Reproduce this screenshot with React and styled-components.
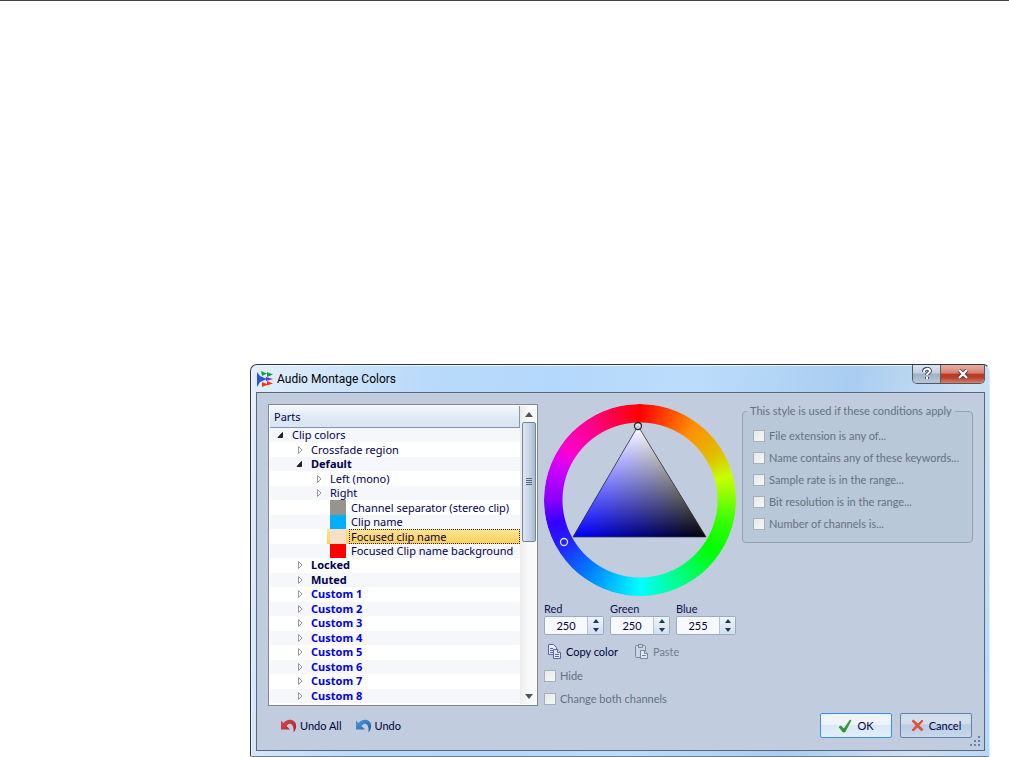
import React, { useState } from "react";
import styled, { createGlobalStyle, css } from "styled-components";

const GlobalStyle = createGlobalStyle`
  * { box-sizing: border-box; }
  body {
    margin: 0;
    background: #fff;
    color: #10104a;
    font-family: Lato, "Open Sans", sans-serif;
    font-size: 11px;
    line-height: 14px;
  }
  button, input {
    font: inherit;
    color: inherit;
  }
`;

const Page = styled.main`
  border-top: 1px solid #444;
  padding: 363px 19px 0 250px;
`;

const Dialog = styled.section`
  border: 1px solid #2b3440;
  border-right-color: #d8ecfa;
  border-bottom-color: #777d85;
  border-radius: 7px 7px 2px 2px;
  padding: 0 4px 5px 5px;
  background: linear-gradient(100deg, #e4effa 0, #b9dafa 22%, #b4d8fb 38%, #bcdcfb 55%, #a9cdf0 75%, #cfe0f2 90%, #b5d9fa 100%);
  box-shadow: inset 1px 1px 0 #eef7ff;
`;

const TitleBar = styled.header`
  display: flex;
  align-items: center;
  height: 27px;
  padding-left: 1px;
`;

const Title = styled.h1`
  margin: 0 auto 0 4px;
  color: #000;
  font: 400 12px/16px Roboto, sans-serif;
`;

const WindowButtons = styled.div`
  display: flex;
  align-self: flex-start;
  border: 1px solid #4e5a6c;
  border-top: 0;
  border-radius: 0 0 5px 5px;
  overflow: hidden;
`;

const WindowButton = styled.button`
  display: grid;
  place-items: center;
  width: ${({ $close }) => ($close ? "44px" : "27px")};
  height: 18px;
  padding: 0;
  border: 0;
  border-left: ${({ $close }) => ($close ? "1px solid #6b5660" : "0")};
  background: ${({ $close }) =>
    $close
      ? "linear-gradient(#e9b0a4 0, #d68272 45%, #bb3a22 50%, #b8402a 70%, #d8806a 100%)"
      : "linear-gradient(#dce5f0 0, #c2cfde 45%, #a0b1c5 50%, #b8c9dc 100%)"};
`;

const Panel = styled.div`
  position: relative;
  border: 1px solid #56677f;
  padding: 11px 11px 12px;
  background: #c1cddf;
`;

const Columns = styled.div`
  display: grid;
  grid-template-columns: 270px 192px 1fr;
  gap: 6px;
  align-items: start;
`;

const TreeBox = styled.div`
  display: grid;
  grid-template-columns: 1fr 16px;
  height: 302px;
  border: 1px solid #7f8794;
  padding: 1px;
  background: #fff;
  font-family: "Noto Sans", "Open Sans", sans-serif;
  color: #00004f;
`;

const TreeMain = styled.div`
  display: flex;
  flex-direction: column;
  min-width: 0;
`;

const TreeHeader = styled.div`
  height: 22px;
  padding: 3px 4px;
  border-right: 1px solid #8296b0;
  border-bottom: 1px solid #8296b0;
  background: linear-gradient(#f4f8fc, #dfe9f5 55%, #d9e5f3);
  line-height: 16px;
`;

const TreeList = styled.ul`
  display: grid;
  grid-template-rows: repeat(19, 1fr);
  height: 275px;
  margin: 0;
  padding: 0;
  list-style: none;
`;

const TreeRow = styled.li`
  display: flex;
  align-items: center;
  min-height: 0;
  padding-left: ${({ $level }) => `${5 + $level * 19}px`};
  background: ${({ $odd }) => ($odd ? "#fff" : "#f6f7fa")};
  font-weight: ${({ $bold }) => ($bold ? 700 : 400)};
  color: ${({ $custom }) => ($custom ? "#0000f0" : "inherit")};
`;

const Arrow = styled.svg`
  flex: none;
  width: 14px;
  height: 10px;
  margin-right: 3px;
`;

const Swatch = styled.span`
  align-self: stretch;
  flex: none;
  width: 16px;
  margin-right: 3px;
  background: ${({ $color }) => $color};
`;

const Leaf = styled.span`
  display: flex;
  align-items: center;
  align-self: stretch;
  flex: 1;
  padding-left: 2px;
  white-space: nowrap;
  ${({ $selected }) =>
    $selected &&
    css`
      outline: 1px dotted #222;
      outline-offset: -1px;
    `}
`;

const LeafRow = styled(TreeRow)`
  padding-left: 60px;
  ${({ $selected }) =>
    $selected &&
    css`
      background: linear-gradient(90deg, #fff 57px, transparent 57px), linear-gradient(#ffe596, #ffcf55);
    `}
`;

const ScrollBar = styled.div`
  display: grid;
  grid-template-rows: 16px 120px 1fr 16px;
  justify-items: center;
  align-items: center;
  padding-left: 1px;
  background: linear-gradient(90deg, #ededed, #fafafa 60%);
`;

const Thumb = styled.div`
  display: grid;
  place-items: center;
  width: 14px;
  height: 120px;
  border: 1px solid #71849e;
  border-radius: 2px;
  background: linear-gradient(90deg, #dfe8f3, #c9d6e6 50%, #a8bace);
`;

const Picker = styled.div`
  display: flex;
  flex-direction: column;
`;

const Wheel = styled.div`
  position: relative;
  width: 192px;
  height: 192px;
`;

const HueRing = styled.div`
  height: 100%;
  border-radius: 50%;
  background: conic-gradient(#f00, #ff8c00 35deg, #e0c000 60deg, #c8ff00 75deg, #3f0 105deg, #0f0 125deg, #00ff60 145deg, #0ff 180deg, #0080ff 215deg, #22f 240deg, #30f 255deg, #80f 270deg, #c0f 290deg, #f0c 305deg, #ff0090 325deg, #f00);
  mask: radial-gradient(circle, transparent 77px, #000 78px);
`;

const Shade = styled.svg`
  position: absolute;
  inset: 0;
  isolation: isolate;

  .light {
    mix-blend-mode: plus-lighter;
  }
`;

const Channels = styled.div`
  display: flex;
  gap: 6px;
  margin-top: 6px;
`;

const Channel = styled.label`
  width: 60px;
`;

const Spin = styled.div`
  display: flex;
  height: 19px;
  border: 1px solid #9dabc0;
  border-radius: 2px;
  background: #f7f9fc;
`;

const SpinInput = styled.input`
  flex: 1;
  min-width: 0;
  padding: 0;
  border: 0;
  background: transparent;
  color: #00003a;
  text-align: center;
`;

const SpinArrows = styled.div`
  display: grid;
  grid-template-rows: 1fr 1fr;
  width: 16px;
  border-left: 1px solid #b3c3d8;
  background: linear-gradient(#eef4fa, #d3dfed);
`;

const SpinButton = styled.button`
  display: grid;
  place-items: center;
  padding: 0;
  border: 0;
  background: transparent;
`;

const Tools = styled.div`
  display: flex;
  align-items: center;
  gap: 12px;
  height: 22px;
  margin: 6px 0 2px;
`;

const ToolButton = styled.button`
  display: flex;
  align-items: center;
  gap: 3px;
  padding: 0 1px 0 3px;
  border: 0;
  background: transparent;
  white-space: nowrap;
  color: #00003a;

  &:disabled {
    color: #717c8c;
  }
`;

const CheckList = styled.div`
  display: grid;
  gap: ${({ $gap }) => $gap || 0};
`;

const CheckRow = styled.label`
  display: flex;
  align-items: center;
  gap: 4px;
  height: 22px;
  white-space: nowrap;
  color: #647080;
`;

const CheckBox = styled.input`
  appearance: none;
  flex: none;
  width: 12px;
  height: 12px;
  margin: 0;
  border: 1px solid #a9adb4;
  background: linear-gradient(135deg, #e6e8ea, #f8f8f8);
`;

const Conditions = styled.fieldset`
  min-width: 0;
  margin: 0;
  padding: 7px 10px;
  border: 1px solid #93a1b3;
  border-radius: 4px;
  background: #b9c8d9;
`;

const Legend = styled.legend`
  margin-left: -6px;
  padding: 0 3px;
  color: #647080;
  white-space: nowrap;
`;

const Footer = styled.footer`
  display: flex;
  align-items: center;
  gap: 9px;
  margin-top: 3px;
  padding: 0 1px 0 9px;
`;

const DialogButtons = styled.div`
  display: flex;
  gap: 8px;
  margin-left: auto;
`;

const PushButton = styled.button`
  display: flex;
  align-items: center;
  justify-content: center;
  gap: 5px;
  width: 72px;
  height: 25px;
  padding: 0;
  border: 1px solid ${({ $primary }) => ($primary ? "#3c8df5" : "#637fa8")};
  border-radius: 2px;
  background: ${({ $primary }) =>
    $primary
      ? "linear-gradient(#edf4fc 45%, #dbe8f7 50%, #e4eefa)"
      : "linear-gradient(#d3deec 42%, #b8cce5 48%, #c9d8ea)"};
  color: #00003a;
`;

const Grip = styled.svg`
  position: absolute;
  right: 3px;
  bottom: 3px;
`;

const tree = [
  { name: "Clip colors", level: 0, open: true },
  { name: "Crossfade region", level: 1 },
  { name: "Default", level: 1, open: true, bold: true },
  { name: "Left (mono)", level: 2 },
  { name: "Right", level: 2 },
  { name: "Channel separator (stereo clip)", color: "#98938c" },
  { name: "Clip name", color: "#00b0ff" },
  { name: "Focused clip name", color: "#fbdfc4", selected: true },
  { name: "Focused Clip name background", color: "#ff0000" },
  { name: "Locked", level: 1, bold: true },
  { name: "Muted", level: 1, bold: true },
  ...[1, 2, 3, 4, 5, 6, 7, 8].map((n) => ({
    name: `Custom ${n}`,
    level: 1,
    bold: true,
    custom: true,
  })),
];

const conditions = [
  "File extension is any of...",
  "Name contains any of these keywords...",
  "Sample rate is in the range...",
  "Bit resolution is in the range...",
  "Number of channels is...",
];

const AppIcon = () => (
  <svg width="16" height="16" viewBox="0 0 16 16">
    <path d="M0 1l3 4 7 3-7 3-3 5z" fill="#2a55e0" />
    <path d="M4 0l6 2.500L5 5zM10 1l6 2.500L10 6z" fill="#18a040" />
    <path d="M9 6l7 2-7 2z" fill="#7a2be0" />
    <path d="M10 10l6 2.500-6 2zM5 11l6 2.500L5 16z" fill="#ee3b14" />
  </svg>
);

const TreeArrow = ({ open }) => (
  <Arrow viewBox="0 0 14 10">
    {open ? (
      <path d="M7.500 2.500v5h-4.500z" fill="#222" stroke="#222" strokeWidth="1" />
    ) : (
      <path d="M4.500 1.500l3.500 3.500-3.500 3.500z" fill="#fff" stroke="#999" />
    )}
  </Arrow>
);

const ScrollArrow = ({ down }) => (
  <svg width="8" height="5" viewBox="0 0 8 5">
    <path d={down ? "M0 0h8L4 5z" : "M4 0l4 5H0z"} fill="#50545a" />
  </svg>
);

const SpinArrow = ({ down }) => (
  <svg width="6" height="4" viewBox="0 0 6 4">
    <path d={down ? "M0 0h6L3 4z" : "M3 0l3 4H0z"} fill="#173a5e" />
  </svg>
);

const CopyIcon = () => (
  <svg width="16" height="16" viewBox="0 0 16 16" fill="#e7ecfa" stroke="#5d62a8">
    <path d="M1.500 .5h5l3 3v7h-8z" />
    <path d="M3 4.500h3M3 6.500h3M3 8.500h3" />
    <path d="M6.500 5.500h4l3 3v6h-7z" />
    <path d="M10.500 5.500v3h3M8 10.500h4M8 12.500h4" />
  </svg>
);

const PasteIcon = () => (
  <svg width="16" height="16" viewBox="0 0 16 16" fill="#cbd5e2" stroke="#7c8796">
    <rect x="1.500" y="1.500" width="10" height="12" rx="1" />
    <path d="M4.500 .5h4v3h-4z" />
    <path d="M6.500 6.500h4l3 3v5h-7z" fill="#e2e8ef" />
    <path d="M10.500 6.500v3h3M8 11.500h4" />
  </svg>
);

const UndoIcon = ({ id, from, to }) => (
  <svg width="17" height="14" viewBox="0 0 17 14">
    <defs>
      <linearGradient id={id} x1="0" x2="1" y2="1">
        <stop offset="0" stopColor={from} />
        <stop offset="1" stopColor={to} />
      </linearGradient>
    </defs>
    <path
      d="M1 1.500l2.500 2.500C6 1 9 .3 12 1c5 1.500 5.500 8 1.500 12.500C14 9 13 5.500 10.500 4.800 8.800 4.300 7.500 5.500 6.500 7L10 10.500H1z"
      fill={`url(#${id})`}
    />
  </svg>
);

const ColorWheel = () => (
  <Wheel>
    <HueRing />
    <Shade width="192" height="192" viewBox="0 0 192 192">
      <defs>
        <linearGradient id="white" gradientUnits="userSpaceOnUse" x1="94" y1="22" x2="94" y2="133">
          <stop offset="0" stopColor="#fff" />
          <stop offset="1" stopColor="#000" />
        </linearGradient>
        <linearGradient id="blue" gradientUnits="userSpaceOnUse" x1="29" y1="133" x2="128" y2="74">
          <stop offset="0" stopColor="#00f" />
          <stop offset="1" stopColor="#000" />
        </linearGradient>
      </defs>
      <path d="M94 22L162 133H29z" fill="url(#white)" />
      <path className="light" d="M94 22L162 133H29z" fill="url(#blue)" />
      <path d="M94 22L162 133H29z" fill="none" stroke="#3a3a50" strokeOpacity=".7" />
      <circle cx="94" cy="22" r="3.500" fill="#fff" fillOpacity=".5" stroke="#222" strokeWidth="1.300" />
      <circle cx="20" cy="138" r="3.500" fill="none" stroke="#dfe4ff" strokeWidth="1.300" />
    </Shade>
  </Wheel>
);

const ChannelSpin = ({ name, initial }) => {
  const [value, setValue] = useState(initial);
  const step = (by) => setValue((v) => Math.max(0, Math.min(255, Number(v) + by)));

  return (
    <Channel>
      {name}
      <Spin>
        <SpinInput value={value} onChange={(e) => setValue(e.target.value)} />
        <SpinArrows>
          <SpinButton aria-label={`${name} up`} onClick={() => step(1)}>
            <SpinArrow />
          </SpinButton>
          <SpinButton aria-label={`${name} down`} onClick={() => step(-1)}>
            <SpinArrow down />
          </SpinButton>
        </SpinArrows>
      </Spin>
    </Channel>
  );
};

const PartsTree = () => (
  <TreeBox>
    <TreeMain>
      <TreeHeader>Parts</TreeHeader>
      <TreeList>
        {tree.map((item, i) =>
          item.color ? (
            <LeafRow key={item.name} $odd={i % 2} $selected={item.selected}>
              <Swatch $color={item.color} />
              <Leaf $selected={item.selected}>{item.name}</Leaf>
            </LeafRow>
          ) : (
            <TreeRow
              key={item.name}
              $level={item.level}
              $odd={i % 2}
              $bold={item.bold}
              $custom={item.custom}
            >
              <TreeArrow open={item.open} />
              {item.name}
            </TreeRow>
          )
        )}
      </TreeList>
    </TreeMain>
    <ScrollBar>
      <ScrollArrow />
      <Thumb>
        <svg width="6" height="8" viewBox="0 0 6 8">
          <path d="M0 .5h6M0 2.500h6M0 4.500h6M0 6.500h6" stroke="#56677f" />
        </svg>
      </Thumb>
      <span />
      <ScrollArrow down />
    </ScrollBar>
  </TreeBox>
);

export default function App() {
  return (
    <Page>
      <GlobalStyle />
      <Dialog>
        <TitleBar>
          <AppIcon />
          <Title>Audio Montage Colors</Title>
          <WindowButtons>
            <WindowButton aria-label="Help">
              <svg width="12" height="14" viewBox="0 0 12 14" fill="none">
                <path d="M3 5c0-4 6-4 6-1 0 2-3 2-3 4M6 10v2" stroke="#3f4a5c" strokeWidth="4" />
                <path d="M3 5c0-4 6-4 6-1 0 2-3 2-3 4M6 10v2" stroke="#fff" strokeWidth="2" />
              </svg>
            </WindowButton>
            <WindowButton $close aria-label="Close">
              <svg width="12" height="10" viewBox="0 0 12 10" fill="none">
                <path d="M2 1l8 8M10 1L2 9" stroke="#5b3a40" strokeWidth="4" />
                <path d="M2 1l8 8M10 1L2 9" stroke="#fff" strokeWidth="2.200" />
              </svg>
            </WindowButton>
          </WindowButtons>
        </TitleBar>
        <Panel>
          <Columns>
            <PartsTree />
            <Picker>
              <ColorWheel />
              <Channels>
                <ChannelSpin name="Red" initial={250} />
                <ChannelSpin name="Green" initial={250} />
                <ChannelSpin name="Blue" initial={255} />
              </Channels>
              <Tools>
                <ToolButton>
                  <CopyIcon />
                  Copy color
                </ToolButton>
                <ToolButton disabled>
                  <PasteIcon />
                  Paste
                </ToolButton>
              </Tools>
              <CheckList $gap="1px">
                <CheckRow>
                  <CheckBox type="checkbox" disabled />
                  Hide
                </CheckRow>
                <CheckRow>
                  <CheckBox type="checkbox" disabled />
                  Change both channels
                </CheckRow>
              </CheckList>
            </Picker>
            <Conditions>
              <Legend>This style is used if these conditions apply</Legend>
              <CheckList>
                {conditions.map((text) => (
                  <CheckRow key={text}>
                    <CheckBox type="checkbox" disabled />
                    {text}
                  </CheckRow>
                ))}
              </CheckList>
            </Conditions>
          </Columns>
          <Footer>
            <ToolButton>
              <UndoIcon id="undo-all" from="#e0474d" to="#9c2329" />
              Undo All
            </ToolButton>
            <ToolButton>
              <UndoIcon id="undo" from="#4a9be6" to="#1f5a9c" />
              Undo
            </ToolButton>
            <DialogButtons>
              <PushButton $primary>
                <svg width="14" height="14" viewBox="0 0 14 14">
                  <path d="M1 8l2-1 3 3 6-9 1 .5L7 13H5z" fill="#2f9e2f" stroke="#217a24" strokeWidth=".6" />
                </svg>
                OK
              </PushButton>
              <PushButton>
                <svg width="13" height="13" viewBox="0 0 13 13">
                  <path d="M1 2l1.500-1L7 5l4-4 1 1-4 4.500 4 4-1.500 1.500L6.500 8l-4 4L1 11l4-4.500z" fill="#f0512a" stroke="#c8371a" strokeWidth=".6" />
                </svg>
                Cancel
              </PushButton>
            </DialogButtons>
          </Footer>
          <Grip width="11" height="11" viewBox="0 0 11 11">
            <path
              d="M8 0h2v2H8zM4 4h2v2H4zM8 4h2v2H8zM0 8h2v2H0zM4 8h2v2H4zM8 8h2v2H8z"
              fill="#6b82a3"
            />
          </Grip>
        </Panel>
      </Dialog>
    </Page>
  );
}
